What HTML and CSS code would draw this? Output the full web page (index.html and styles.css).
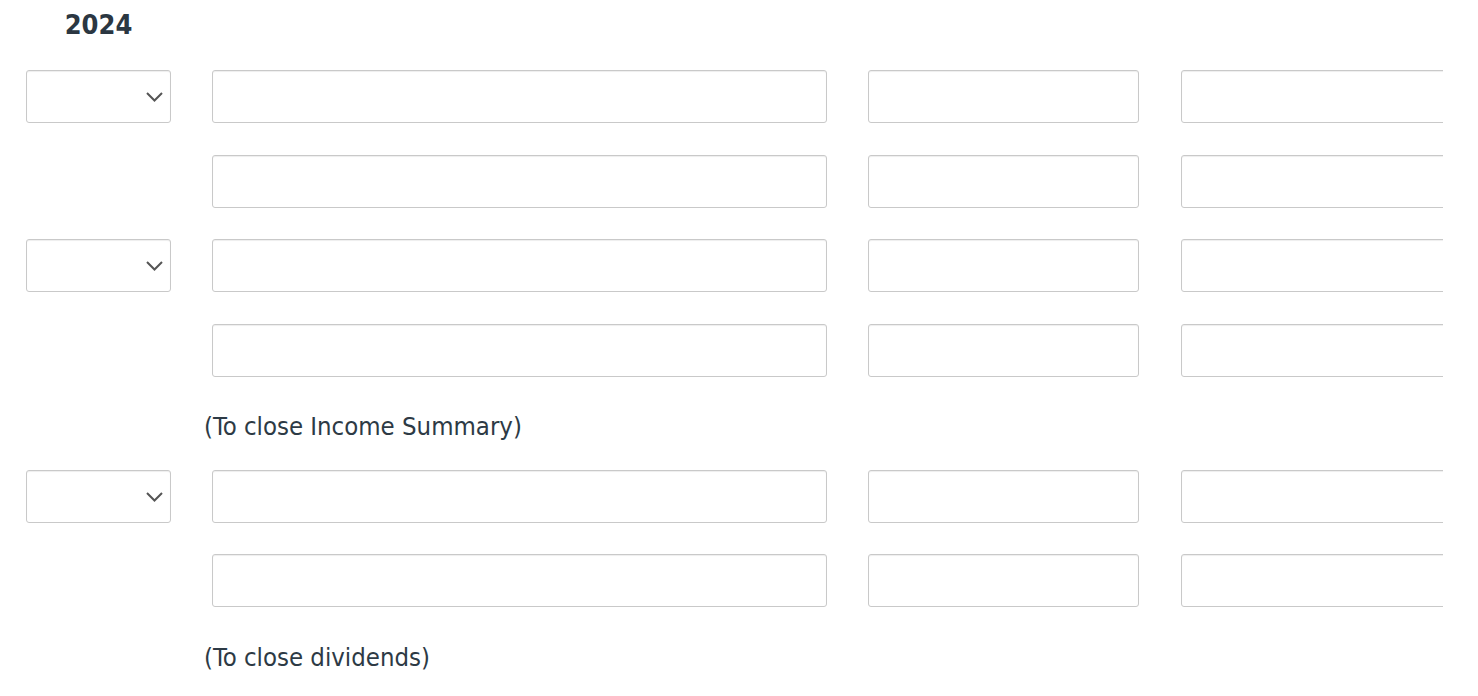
FILE: index.html
```html
<!DOCTYPE html>
<html lang="en">
<head>
<meta charset="utf-8">
<title>Closing entries 2024</title>
<link rel="stylesheet" href="styles.css">
</head>
<body>
<div class="sheet">
  <div class="grid">
    <div class="year">2024</div>
    <div class="blank"></div>
    <div class="blank"></div>
    <div class="blank"></div>

    <div class="sel"><select class="select"><option></option></select><svg class="chev" width="17" height="10" viewBox="0 0 17 10"><polyline points="1,1 8.5,8.5 16,1" fill="none" stroke="#555" stroke-width="2"/></svg></div>
    <input class="field" type="text">
    <input class="field" type="text">
    <input class="field last" type="text">

    <div class="blank"></div>
    <input class="field" type="text">
    <input class="field" type="text">
    <input class="field last" type="text">

    <div class="sel"><select class="select"><option></option></select><svg class="chev" width="17" height="10" viewBox="0 0 17 10"><polyline points="1,1 8.5,8.5 16,1" fill="none" stroke="#555" stroke-width="2"/></svg></div>
    <input class="field" type="text">
    <input class="field" type="text">
    <input class="field last" type="text">

    <div class="blank"></div>
    <input class="field" type="text">
    <input class="field" type="text">
    <input class="field last" type="text">

    <div class="blank"></div>
    <div class="note">(To close Income Summary)</div>

    <div class="sel"><select class="select"><option></option></select><svg class="chev" width="17" height="10" viewBox="0 0 17 10"><polyline points="1,1 8.5,8.5 16,1" fill="none" stroke="#555" stroke-width="2"/></svg></div>
    <input class="field" type="text">
    <input class="field" type="text">
    <input class="field last" type="text">

    <div class="blank"></div>
    <input class="field" type="text">
    <input class="field" type="text">
    <input class="field last" type="text">

    <div class="blank"></div>
    <div class="note">(To close dividends)</div>
  </div>
</div>
</body>
</html>
```

FILE: styles.css
```css
html, body {
  margin: 0;
  padding: 0;
  background: #ffffff;
}

body {
  font-family: "DejaVu Sans Condensed", "DejaVu Sans", Verdana, sans-serif;
  color: #2d3a45;
}

.sheet {
  width: 1443px;
  overflow: hidden;
  padding-top: 9px;
  padding-bottom: 20px;
}

.grid {
  display: grid;
  grid-template-columns: 145px 615px 271px 271px;
  column-gap: 41px;
  row-gap: 31.5px;
  padding-left: 26px;
  width: max-content;
}

.year {
  font-weight: bold;
  font-size: 27px;
  line-height: 32px;
  text-align: center;
  margin-bottom: -2.5px;
  color: #2b3742;
}

.sel {
  position: relative;
  height: 53px;
}

.select {
  appearance: none;
  -webkit-appearance: none;
  display: block;
  width: 100%;
  height: 53px;
  margin: 0;
  border: 1px solid #c9c9c9;
  border-radius: 3px;
  background: #ffffff;
  box-shadow: inset 0 1px 1px rgba(0, 0, 0, 0.07);
  box-sizing: border-box;
  font: inherit;
}

.chev {
  position: absolute;
  left: 120px;
  top: 22px;
  pointer-events: none;
}

.field {
  display: block;
  height: 53px;
  margin: 0;
  padding: 0 8px;
  border: 1px solid #c9c9c9;
  border-radius: 3px;
  background: #ffffff;
  box-shadow: inset 0 1px 1px rgba(0, 0, 0, 0.07);
  box-sizing: border-box;
  width: 100%;
  font: inherit;
}

.field.last {
  margin-left: 1px;
}

.note {
  grid-column: 2 / 5;
  font-size: 25.5px;
  line-height: 30px;
  margin-top: 3px;
  margin-bottom: -3px;
  margin-left: -8px;
  white-space: nowrap;
}
```
